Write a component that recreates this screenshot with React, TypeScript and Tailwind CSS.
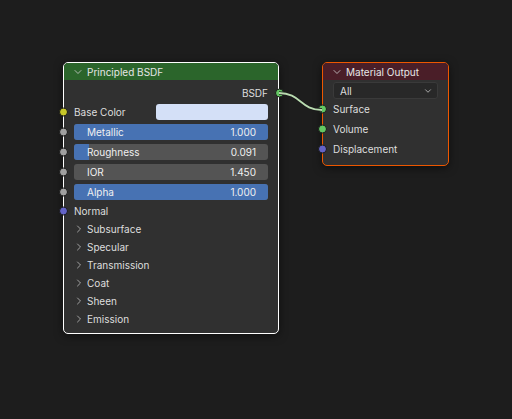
import { ChevronDown, ChevronRight } from 'lucide-react';

type SocketColor = 'yellow' | 'grey' | 'purple' | 'green';

const socketBg: Record<SocketColor, string> = {
  yellow: 'bg-[#c7c729]',
  grey: 'bg-[#a1a1a1]',
  purple: 'bg-[#6363c7]',
  green: 'bg-[#63c763]',
};

// socket dot sits over the node border
function Socket({ color, side }: { color: SocketColor; side: 'left' | 'right' }) {
  const pos = side === 'left' ? '-left-[5.5px]' : '-right-[5.5px]';
  return (
    <span
      className={`absolute ${pos} top-1/2 -translate-y-1/2 w-[9px] h-[9px] rounded-full border border-[#1a1a1a] ${socketBg[color]}`}
    />
  );
}

function Slider({ label, value, fill }: { label: string; value: string; fill?: number }) {
  return (
    <div className="relative h-[20px] flex items-center px-[10px]">
      <Socket color="grey" side="left" />
      <div className="relative w-full h-[16px] rounded-[3px] bg-[#545454] overflow-hidden">
        {fill !== undefined && (
          <div className="absolute left-0 top-0 h-full bg-[#4772b3]" style={{ width: `${fill * 100}%` }} />
        )}
        <div className="relative h-full flex items-center justify-between pl-[13px] pr-[12px] text-[#f0f0f0]">
          <span>{label}</span>
          <span>{value}</span>
        </div>
      </div>
    </div>
  );
}

function Panel({ label }: { label: string }) {
  return (
    <div className="h-[18px] flex items-center pl-[9px] gap-[2px]">
      <ChevronRight size={12} strokeWidth={1.6} className="text-[#bdbdbd]" />
      <span>{label}</span>
    </div>
  );
}

function PrincipledNode() {
  return (
    <div className="absolute left-[63px] top-[62px] w-[216px] h-[272px] rounded-[5px] border-[1.5px] border-white bg-[#303030] shadow-[0_2px_8px_rgba(0,0,0,0.5)]">
      <div className="h-[17px] bg-[#2b652b] rounded-t-[4px] flex items-center pl-[8px] gap-[3px] text-[#e6e6e6]">
        <ChevronDown size={12} strokeWidth={1.6} className="text-[#cfcfcf]" />
        <span>Principled BSDF</span>
      </div>
      <div className="pt-[4px] flex flex-col">
        <div className="relative h-[18px] flex items-center justify-end pr-[10px]">
          <span>BSDF</span>
          <Socket color="green" side="right" />
        </div>
        <div className="relative h-[20px] flex items-center pl-[10px] pr-[10px]">
          <Socket color="yellow" side="left" />
          <span className="flex-1">Base Color</span>
          <div className="w-[112px] h-[16px] rounded-[3px] bg-[#d4e0f7]" />
        </div>
        <Slider label="Metallic" value="1.000" fill={1} />
        <Slider label="Roughness" value="0.091" fill={0.075} />
        <Slider label="IOR" value="1.450" />
        <Slider label="Alpha" value="1.000" fill={1} />
        <div className="relative h-[18px] flex items-center pl-[10px]">
          <Socket color="purple" side="left" />
          <span>Normal</span>
        </div>
        <Panel label="Subsurface" />
        <Panel label="Specular" />
        <Panel label="Transmission" />
        <Panel label="Coat" />
        <Panel label="Sheen" />
        <Panel label="Emission" />
      </div>
    </div>
  );
}

function OutputNode() {
  return (
    <div className="absolute left-[322px] top-[62px] w-[127px] h-[104px] rounded-[5px] border-[1.5px] border-[#ed5700] bg-[#303030] shadow-[0_2px_8px_rgba(0,0,0,0.5)]">
      <div className="h-[17px] bg-[#4a1e28] rounded-t-[4px] flex items-center pl-[8px] gap-[3px] text-[#e6e6e6]">
        <ChevronDown size={12} strokeWidth={1.6} className="text-[#cfcfcf]" />
        <span>Material Output</span>
      </div>
      <div className="px-[10px] pt-[2px]">
        <div className="h-[17px] rounded-[3px] bg-[#282828] border border-[#3a3a3a] flex items-center justify-between pl-[6px] pr-[4px]">
          <span>All</span>
          <ChevronDown size={10} strokeWidth={1.8} className="text-[#cfcfcf]" />
        </div>
      </div>
      <div className="flex flex-col">
        {[
          { label: 'Surface', color: 'green' as SocketColor },
          { label: 'Volume', color: 'green' as SocketColor },
          { label: 'Displacement', color: 'purple' as SocketColor },
        ].map((s) => (
          <div key={s.label} className="relative h-[20px] flex items-center pl-[10px]">
            <Socket color={s.color} side="left" />
            <span>{s.label}</span>
          </div>
        ))}
      </div>
    </div>
  );
}

export default function App() {
  return (
    <div
      className="relative w-[512px] h-[419px] overflow-hidden bg-[#1d1d1d] text-[10px] leading-none text-[#dedede]"
      style={{ fontFamily: 'Inter, "DejaVu Sans", sans-serif' }}
    >
      <PrincipledNode />
      <OutputNode />
      {/* link BSDF -> Surface */}
      <svg className="absolute left-0 top-0 pointer-events-none" width={512} height={419}>
        <path d="M279 93 C301 93 300 110 322 110" fill="none" stroke="#1a1a1a" strokeWidth={3.5} />
        <path d="M279 93 C301 93 300 110 322 110" fill="none" stroke="#b9dbb0" strokeWidth={1.8} />
      </svg>
    </div>
  );
}
